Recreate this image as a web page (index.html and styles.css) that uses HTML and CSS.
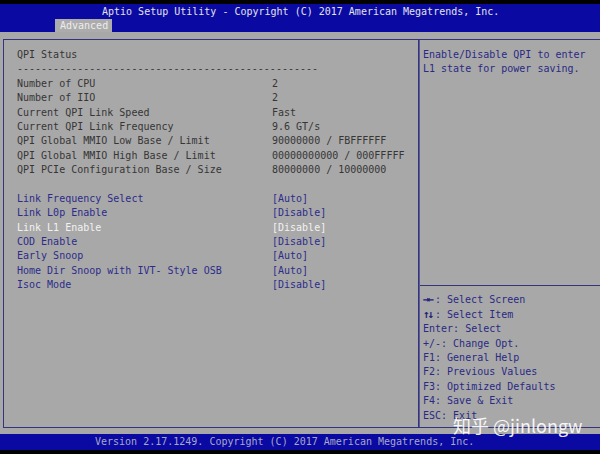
FILE: index.html
```html
<!DOCTYPE html>
<html>
<head>
<meta charset="utf-8">
<link rel="stylesheet" href="styles.css">
</head>
<body>
<div class="screen">
  <div class="topblack"></div>
  <div class="header">
    <div class="title">Aptio Setup Utility - Copyright (C) 2017 American Megatrends, Inc.</div>
    <div class="tabs"><span class="tab">Advanced</span></div>
  </div>
  <div class="main">
    <div class="panel">
      <div class="left">
        <div class="row"><span class="lbl">QPI Status</span></div>
        <div class="row"><span class="lbl">--------------------------------------------------</span></div>
        <div class="row"><span class="lbl">Number of CPU</span><span class="val">2</span></div>
        <div class="row"><span class="lbl">Number of IIO</span><span class="val">2</span></div>
        <div class="row"><span class="lbl">Current QPI Link Speed</span><span class="val">Fast</span></div>
        <div class="row"><span class="lbl">Current QPI Link Frequency</span><span class="val">9.6 GT/s</span></div>
        <div class="row"><span class="lbl">QPI Global MMIO Low Base / Limit</span><span class="val">90000000 / FBFFFFFF</span></div>
        <div class="row"><span class="lbl">QPI Global MMIO High Base / Limit</span><span class="val">00000000000 / 000FFFFF</span></div>
        <div class="row"><span class="lbl">QPI PCIe Configuration Base / Size</span><span class="val">80000000 / 10000000</span></div>
        <div class="row"></div>
        <div class="row opt"><span class="lbl">Link Frequency Select</span><span class="val">[Auto]</span></div>
        <div class="row opt"><span class="lbl">Link L0p Enable</span><span class="val">[Disable]</span></div>
        <div class="row opt sel"><span class="lbl">Link L1 Enable</span><span class="val">[Disable]</span></div>
        <div class="row opt"><span class="lbl">COD Enable</span><span class="val">[Disable]</span></div>
        <div class="row opt"><span class="lbl">Early Snoop</span><span class="val">[Auto]</span></div>
        <div class="row opt"><span class="lbl">Home Dir Snoop with IVT- Style OSB</span><span class="val">[Auto]</span></div>
        <div class="row opt"><span class="lbl">Isoc Mode</span><span class="val">[Disable]</span></div>
      </div>
      <div class="right">
        <div class="desc">
          <div class="row">Enable/Disable QPI to enter</div>
          <div class="row">L1 state for power saving.</div>
        </div>
        <div class="help">
          <div class="row"><span class="arr">→←</span>: Select Screen</div>
          <div class="row"><span class="arr">↑↓</span>: Select Item</div>
          <div class="row">Enter: Select</div>
          <div class="row">+/-: Change Opt.</div>
          <div class="row">F1: General Help</div>
          <div class="row">F2: Previous Values</div>
          <div class="row">F3: Optimized Defaults</div>
          <div class="row">F4: Save &amp; Exit</div>
          <div class="row">ESC: Exit</div>
        </div>
      </div>
    </div>
  </div>
  <div class="footer">Version 2.17.1249. Copyright (C) 2017 American Megatrends, Inc.</div>
  <div class="bottomblack"></div>
  <div class="watermark">知乎 @jinlongw</div>
</div>
</body>
</html>
```
FILE: styles.css
```css
html, body {
  margin: 0;
  padding: 0;
  background: #000;
}
.screen {
  position: relative;
  width: 600px;
  height: 454px;
  display: flex;
  flex-direction: column;
  font-family: "DejaVu Sans Mono", "Liberation Mono", monospace;
  font-size: 10px;
  overflow: hidden;
}
.topblack {
  height: 4px;
  background: #000;
}
.header {
  height: 28px;
  background: #0a0aa2;
  display: flex;
  flex-direction: column;
}
.title {
  color: #e2e2ea;
  height: 14px;
  line-height: 14px;
  padding-top: 1px;
  padding-left: 102px;
  white-space: pre;
}
.tabs {
  display: flex;
  padding-left: 55px;
}
.tab {
  background: #acacac;
  color: #ececec;
  height: 13px;
  line-height: 13px;
  padding: 0 4px 0 5px;
}
.main {
  height: 402px;
  background: #a8a8a8;
  padding: 7px 0 6px 3px;
  box-sizing: border-box;
  display: flex;
}
.panel {
  flex: 1;
  border: 1px solid #34347e;
  border-right: none;
  display: flex;
}
.left {
  width: 415px;
  padding: 8px 0 0 13px;
  box-sizing: border-box;
  border-right: 1px solid #34347e;
  color: #363636;
}
.row {
  height: 14.4px;
  line-height: 14.4px;
  white-space: pre;
  display: flex;
}
.lbl {
  width: 255px;
}
.val {
  white-space: pre;
}
.opt {
  color: #2c2c8a;
}
.sel {
  color: #f2f2f2;
}
.right {
  flex: 1;
  display: flex;
  flex-direction: column;
  justify-content: space-between;
  border-left: 1px solid #5a5a94;
  color: #2a2a84;
}
.desc {
  padding: 8px 0 0 3px;
}
.help {
  border-top: 1px solid #34347e;
  padding: 7px 0 4px 3px;
}
.arr {
  font-weight: bold;
  font-size: 11px;
  letter-spacing: -2px;
  display: inline-block;
  width: 12px;
  color: #22227a;
}
.footer {
  height: 16px;
  line-height: 16px;
  background: #0a0aa2;
  color: #a8a8c4;
  padding-left: 95px;
  white-space: pre;
}
.bottomblack {
  flex: 1;
  background: #000;
}
.watermark {
  position: absolute;
  left: 453px;
  top: 417px;
  font-family: "Noto Sans CJK SC", "Noto Sans", sans-serif;
  font-size: 18px;
  line-height: 17px;
  color: rgba(255, 255, 255, 0.92);
  white-space: pre;
}
```
